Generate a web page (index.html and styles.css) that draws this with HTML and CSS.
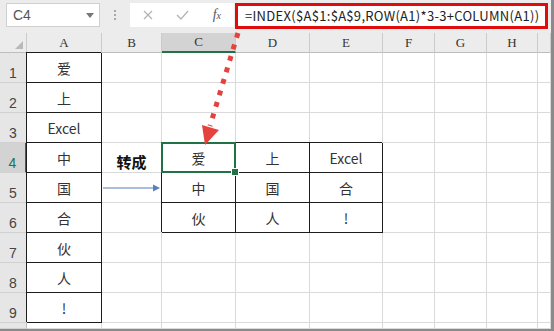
FILE: index.html
```html
<!DOCTYPE html>
<html lang="zh-CN">
<head>
  <meta charset="UTF-8" />
  <title>INDEX 转成</title>
  <link rel="stylesheet" href="styles.css">
</head>
<body>
  <div class="app">

    <div class="toolbar">
      <div class="namebox">
        <span>C4</span>
        <svg class="caret" width="8" height="5" viewBox="0 0 8 5"><path d="M0 0H8L4 5Z" fill="#777"/></svg>
      </div>
      <div class="grip"><i></i><i></i><i></i></div>
      <div class="fbtns">
        <svg width="10" height="10" viewBox="0 0 10 10"><path d="M1 1L9 9M9 1L1 9" stroke="#b4b4b4" stroke-width="1.3"/></svg>
        <svg width="13" height="10" viewBox="0 0 13 10"><path d="M1 5L5 9L12 1" stroke="#b4b4b4" stroke-width="1.3" fill="none"/></svg>
        <span class="fx">f<span class="fx-x">x</span></span>
      </div>
      <div class="formula">=INDEX($A$1:$A$9,ROW(A1)*3-3+COLUMN(A1))</div>
    </div>

    <div class="sheet">
      <!-- column headers -->
      <div class="corner"><svg width="8" height="8" viewBox="0 0 8 8"><path d="M8 0V8H0Z" fill="#b9b9b9"/></svg></div>
      <div class="ch">A</div><div class="ch">B</div><div class="ch sel">C</div><div class="ch">D</div>
      <div class="ch">E</div><div class="ch">F</div><div class="ch">G</div><div class="ch">H</div><div class="ch"></div>

      <div class="rh">1</div><div class="c b">爱</div><div class="c"></div><div class="c"></div><div class="c"></div><div class="c"></div><div class="c"></div><div class="c"></div><div class="c"></div><div class="c"></div>
      <div class="rh">2</div><div class="c b">上</div><div class="c"></div><div class="c"></div><div class="c"></div><div class="c"></div><div class="c"></div><div class="c"></div><div class="c"></div><div class="c"></div>
      <div class="rh">3</div><div class="c b">Excel</div><div class="c"></div><div class="c"></div><div class="c"></div><div class="c"></div><div class="c"></div><div class="c"></div><div class="c"></div><div class="c"></div>
      <div class="rh sel">4</div><div class="c b">中</div><div class="c label">转成</div><div class="c b active">爱</div><div class="c b">上</div><div class="c b">Excel</div><div class="c"></div><div class="c"></div><div class="c"></div><div class="c"></div>
      <div class="rh">5</div><div class="c b">国</div>
      <div class="c arrow"><svg width="58" height="8" viewBox="0 0 58 8"><path d="M0 4H51" stroke="#5a7fbf" stroke-width="1.2"/><path d="M50 0.5L57 4L50 7.5Z" fill="#5a7fbf"/></svg></div>
      <div class="c b">中</div><div class="c b">国</div><div class="c b">合</div><div class="c"></div><div class="c"></div><div class="c"></div><div class="c"></div>
      <div class="rh">6</div><div class="c b">合</div><div class="c"></div><div class="c b">伙</div><div class="c b">人</div><div class="c b">!</div><div class="c"></div><div class="c"></div><div class="c"></div><div class="c"></div>
      <div class="rh">7</div><div class="c b">伙</div><div class="c"></div><div class="c"></div><div class="c"></div><div class="c"></div><div class="c"></div><div class="c"></div><div class="c"></div><div class="c"></div>
      <div class="rh">8</div><div class="c b">人</div><div class="c"></div><div class="c"></div><div class="c"></div><div class="c"></div><div class="c"></div><div class="c"></div><div class="c"></div><div class="c"></div>
      <div class="rh">9</div><div class="c b">!</div><div class="c"></div><div class="c"></div><div class="c"></div><div class="c"></div><div class="c"></div><div class="c"></div><div class="c"></div><div class="c"></div>
      <div class="rh"></div><div class="c"></div><div class="c"></div><div class="c"></div><div class="c"></div><div class="c"></div><div class="c"></div><div class="c"></div><div class="c"></div><div class="c"></div>
    </div>

    <!-- dotted callout from formula to C4 -->
    <svg class="pointer" width="554" height="331" viewBox="0 0 554 331">
      <path d="M238 33L210 126" stroke="#e5413f" stroke-width="5" stroke-dasharray="5 7"/>
      <path d="M202 125L219 130L205 145Z" fill="#e5413f"/>
    </svg>

  </div>
</body>
</html>
```

FILE: styles.css
```css
* {
  box-sizing: border-box;
}

body {
  margin: 0;
  background: #fff;
  font-family: "Noto Sans CJK SC", "Noto Sans", sans-serif;
}

.app {
  position: relative;
  width: 554px;
  height: 331px;
  border-right: 3px solid #8a8a8a;
  border-bottom: 2px solid #8a8a8a;
  overflow: hidden;
}

/* formula bar */
.toolbar {
  height: 33px;
  background: #ececec;
  display: flex;
  align-items: flex-start;
  padding-top: 3px;
}

.namebox {
  margin-left: 6px;
  width: 94px;
  height: 24px;
  background: #fff;
  border: 1px solid #cfcfcf;
  display: flex;
  align-items: center;
  justify-content: space-between;
  padding: 0 5px 0 6px;
  font-family: "Liberation Sans", sans-serif;
  font-size: 14px;
  color: #555;
}

.grip {
  width: 30px;
  height: 24px;
  display: flex;
  flex-direction: column;
  align-items: center;
  justify-content: center;
  gap: 2px;
}

.grip i {
  width: 2px;
  height: 2px;
  background: #a8a8a8;
}

.fbtns {
  width: 104px;
  height: 24px;
  background: #fff;
  display: flex;
  align-items: center;
  justify-content: space-between;
  padding: 0 13px 0 13px;
}

.fx {
  font-family: "Liberation Serif", serif;
  font-style: italic;
  font-size: 14px;
  color: #555;
}

.fx-x {
  font-size: 10px;
}

.formula {
  margin-left: 1px;
  width: 313px;
  height: 26px;
  border: 3px solid #e00b0b;
  background: #fff;
  font-size: 13px;
  letter-spacing: 0.3px;
  line-height: 20px;
  padding-left: 7px;
  color: #222;
  white-space: nowrap;
  overflow: hidden;
}

/* sheet grid */
.sheet {
  display: grid;
  grid-template-columns: 27px 75px 60px 74px 74px 73px 52px 52px 51px 1fr;
  grid-template-rows: 20px repeat(9, 30px) 1fr;
  height: 296px;
}

.corner,
.ch {
  background: #ececec;
  border-right: 1px solid #cbcbcb;
  border-bottom: 1px solid #bdbdbd;
}

.corner {
  display: flex;
  align-items: flex-end;
  justify-content: flex-end;
  padding: 0 3px 3px 0;
}

.ch {
  display: flex;
  align-items: center;
  justify-content: center;
  font-family: "Liberation Serif", serif;
  font-size: 13px;
  color: #333;
}

.ch.sel {
  background: #d3d3d3;
  border-bottom: 2px solid #217346;
}

.rh {
  background: #e6e6e6;
  border-right: 1px solid #bdbdbd;
  border-bottom: 1px solid #d0d0d0;
  display: flex;
  align-items: flex-end;
  justify-content: center;
  font-family: "Liberation Sans", sans-serif;
  font-size: 14px;
  line-height: 18px;
  color: #444;
}

.rh.sel {
  background: #d3d3d3;
  color: #217346;
  border-right: 2px solid #217346;
}

.c {
  border-right: 1px solid #dadada;
  border-bottom: 1px solid #dadada;
  display: flex;
  align-items: flex-end;
  justify-content: center;
  padding-bottom: 4px;
  font-size: 14px;
  line-height: 20px;
  color: #333;
}

.c.b {
  border-right-color: #1c1c1c;
  border-bottom-color: #1c1c1c;
  box-shadow: -1px -1px 0 #1c1c1c;
}

.c.label {
  font-weight: bold;
  font-size: 15px;
  color: #111;
  padding-bottom: 0;
}

.c.arrow {
  align-items: center;
  justify-content: flex-end;
  padding: 0;
}

.c.active {
  position: relative;
}

.c.active::before {
  content: "";
  position: absolute;
  left: -1px;
  top: -1px;
  right: -1px;
  bottom: -1px;
  border: 2px solid #217346;
}

.c.active::after {
  content: "";
  position: absolute;
  right: -4px;
  bottom: -4px;
  width: 6px;
  height: 6px;
  background: #217346;
  border: 1px solid #fff;
}

.pointer {
  position: absolute;
  left: 0;
  top: 0;
  pointer-events: none;
}
```
